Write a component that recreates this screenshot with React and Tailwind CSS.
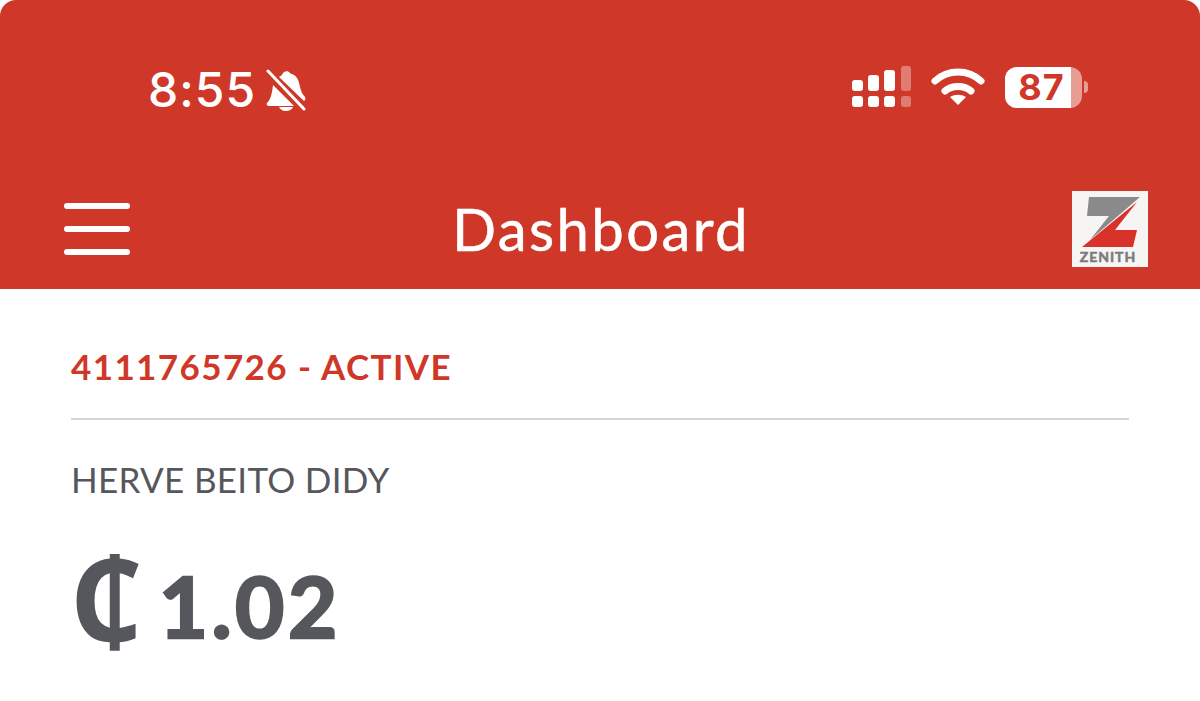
const lato = { fontFamily: 'Lato, sans-serif' };
const inter = { fontFamily: 'Inter, sans-serif' };

const BellOff = () => (
  <svg width="40" height="42" viewBox="0 0 40 42" fill="none" className="shrink-0">
    <path d="M16 6c1-4 6-5 8-2 1 1 1 1 2 1 6 2 7 8 8 13 1 4 2 7 5 10 1 2 0 3-1 4L13 8c1-1 2-1 3-2z" fill="#fff" />
    <path d="M7 16l21 21H3c-2 0-3-2-2-3 4-4 5-10 6-18z" fill="#fff" />
    <path d="M13 38h14c-1 2-3 4-7 4s-6-2-7-4z" fill="#fff" />
    <path d="M2 2l36 38" stroke="#cf3829" strokeWidth="7" />
    <path d="M2 2l36 38" stroke="#fff" strokeWidth="3" strokeLinecap="round" />
  </svg>
);

const Signal = () => (
  <svg width="60" height="42" viewBox="0 0 60 42" className="shrink-0">
    <g fill="#fff">
      <rect x="1" y="14" width="11" height="11" rx="3" />
      <rect x="17" y="9" width="11" height="16" rx="3" />
      <rect x="33" y="4" width="11" height="21" rx="3" />
      <rect x="1" y="30" width="11" height="11" rx="3" />
      <rect x="17" y="30" width="11" height="11" rx="3" />
      <rect x="33" y="30" width="11" height="11" rx="3" />
    </g>
    <g fill="#fff" fillOpacity="0.35">
      <rect x="50" y="0" width="10" height="25" rx="3" />
      <rect x="50" y="30" width="10" height="11" rx="3" />
    </g>
  </svg>
);

const Wifi = () => (
  <svg width="54" height="40" viewBox="0 0 54 40" fill="none" className="shrink-0">
    <path d="M4 14C17 2 37 2 50 14" stroke="#fff" strokeWidth="7" strokeLinecap="round" />
    <path d="M14 24c7-6 19-6 26 0" stroke="#fff" strokeWidth="7" strokeLinecap="round" />
    <path d="M19 30c5-3 11-3 16 0l-8 8z" fill="#fff" />
  </svg>
);

const Battery = () => (
  <div className="flex items-center gap-[2px]">
    <div className="flex h-[41px] w-[77px] items-center rounded-[12px] bg-white/50">
      <div className="flex h-full w-[66px] items-center justify-center rounded-l-[12px] bg-white pl-[7px]">
        <span className="text-[36px] font-bold leading-none tracking-[1px] text-[#cf3829]" style={inter}>87</span>
      </div>
    </div>
    <div className="h-[12px] w-[4px] rounded-r-full bg-white/50" />
  </div>
);

const ZenithLogo = () => (
  <div className="flex h-[76px] w-[76px] shrink-0 flex-col items-center bg-[#f7f5f4]">
    <svg width="76" height="58" viewBox="0 0 76 58" className="shrink-0">
      <path d="M17 6h51L18 49l19-24H15z" fill="#8a8a8a" />
      <path d="M65 11 43 39h22l-4 17H10z" fill="#d8322a" />
    </svg>
    <span className="mt-[1px] pr-[4px] text-[14px] font-bold leading-none tracking-[1px] text-[#7b7b7b] [-webkit-text-stroke:0.5px_#7b7b7b]" style={lato}>ZENITH</span>
  </div>
);

export default function App() {
  return (
    <div className="h-[701px] w-[1200px] overflow-hidden bg-white" style={lato}>
      <header className="flex h-[289px] flex-col rounded-t-[16px] bg-[#cf3829] text-white">
        <div className="flex h-[191px] items-start justify-between pl-[148px] pr-[112px] pt-[68px]">
          <div className="flex items-center gap-[10px]">
            <span className="text-[48px] font-medium leading-[44px] tracking-[1px]" style={inter}>8:55</span>
            <BellOff />
          </div>
          <div className="mt-[-2px] flex items-center gap-[20px]">
            <Signal />
            <Wifi />
            <Battery />
          </div>
        </div>
        <div className="flex h-[76px] items-center justify-between pl-[64px] pr-[52px]">
          <div className="flex w-[66px] flex-col gap-[17px]">
            <span className="h-[6px] rounded-full bg-white" />
            <span className="h-[6px] rounded-full bg-white" />
            <span className="h-[6px] rounded-full bg-white" />
          </div>
          <h1 className="text-[58px] leading-none tracking-[2.4px] [-webkit-text-stroke:0.5px_#fff]">Dashboard</h1>
          <ZenithLogo />
        </div>
      </header>
      <main className="px-[71px] pt-[57px]">
        <p className="text-[35px] font-bold leading-[40px] tracking-[1.4px] text-[#cf3829]">4111765726 - ACTIVE</p>
        <hr className="mt-[32px] h-[2px] border-0 bg-[#d6d6d8]" />
        <p className="mt-[39px] text-[35px] leading-[40px] tracking-[0.3px] text-[#55575c]">HERVE BEITO DIDY</p>
        <p className="mt-[50px] flex items-baseline gap-[15px] font-bold leading-[90px] text-[#55575c]">
          <span className="translate-x-[-1px] translate-y-[3px] text-[114px]" style={{ fontFamily: '"Noto Sans", sans-serif' }}>₵</span>
          <span className="text-[85px] tracking-[3.5px] [-webkit-text-stroke:2.5px_#55575c]">1.02</span>
        </p>
      </main>
    </div>
  );
}
